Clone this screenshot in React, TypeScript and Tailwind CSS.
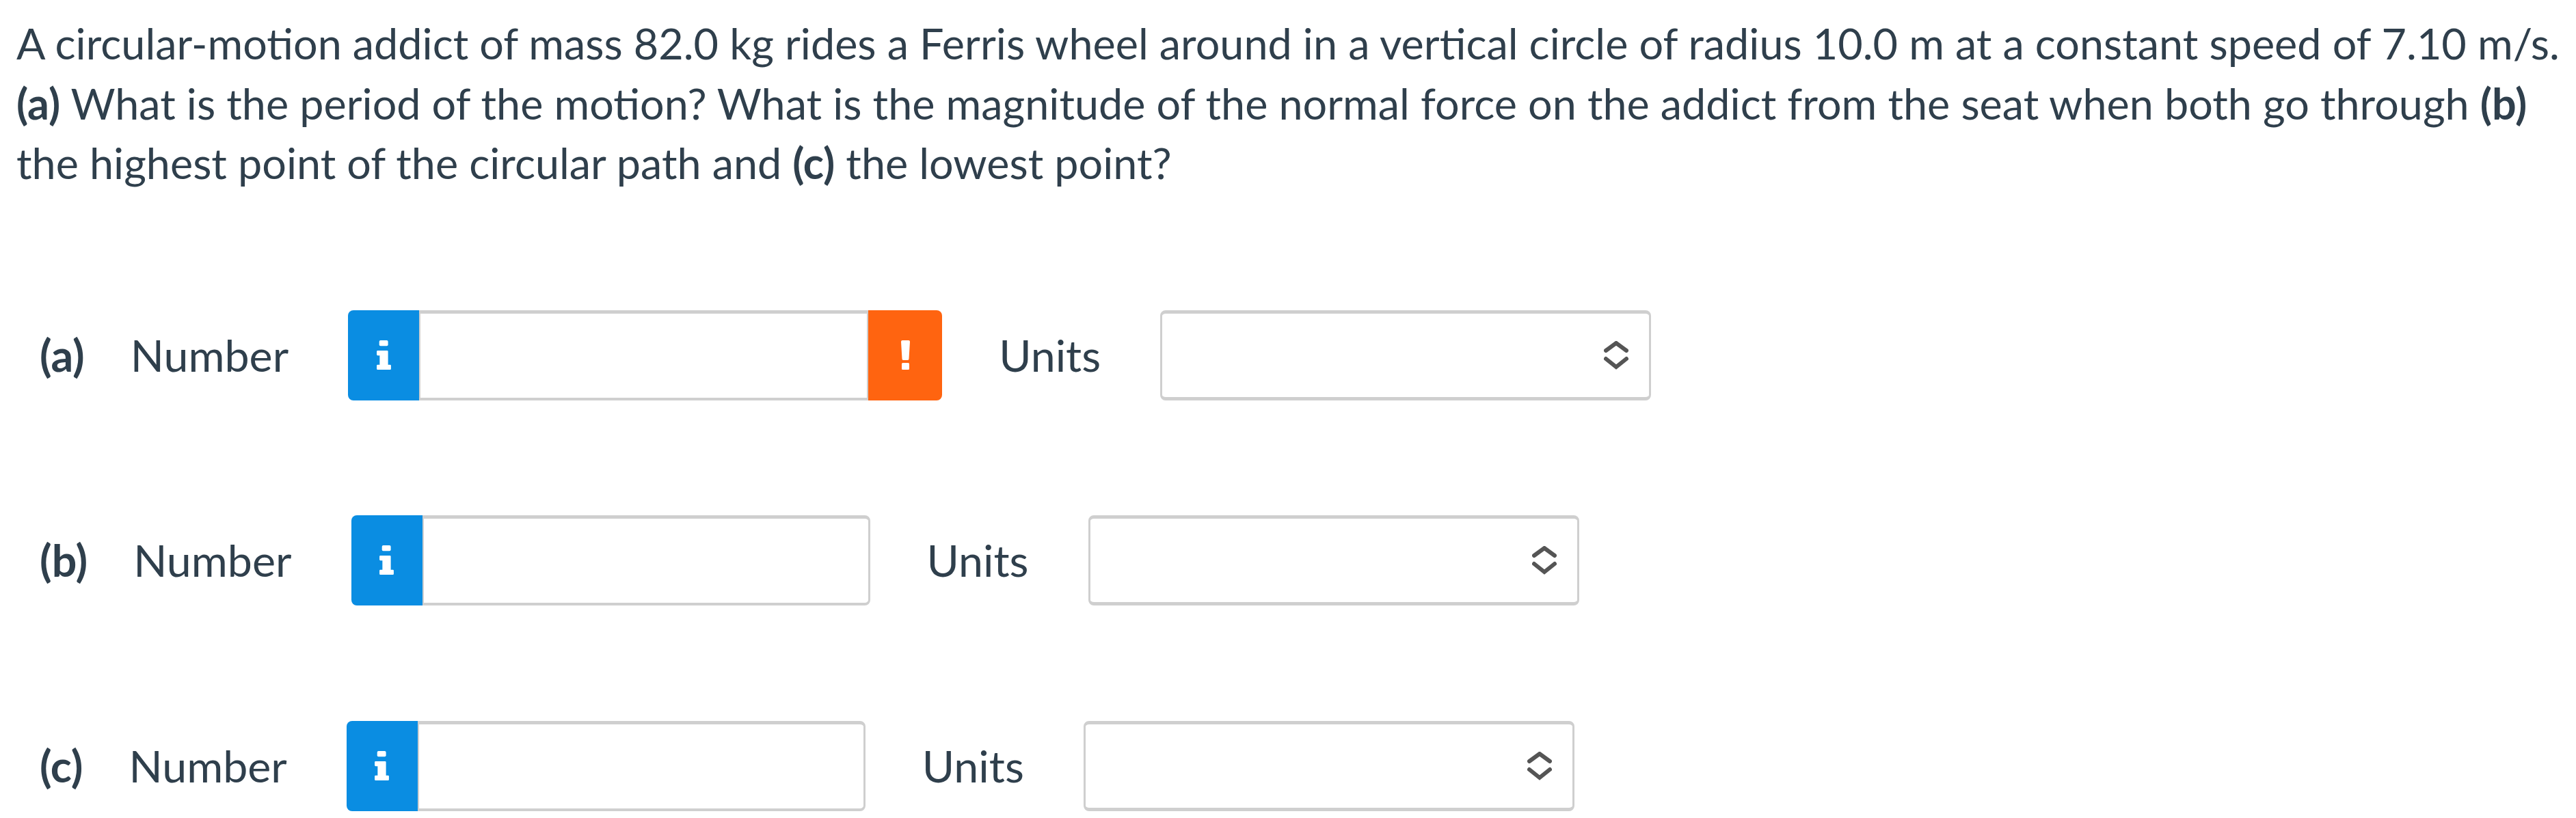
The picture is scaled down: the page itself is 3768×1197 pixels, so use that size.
function InfoIcon() {
  return (
    <svg viewBox="0 0 63 130" className="w-[21px] h-[43px]" fill="#fff">
      <rect x="11" y="0" width="39" height="25" rx="6" />
      <path d="M4 45H46Q50 45 50 49V108H59Q63 108 63 112V126Q63 130 59 130H4Q0 130 0 126V112Q0 108 4 108H13V67H4Q0 67 0 63V49Q0 45 4 45Z" />
    </svg>
  );
}

function AlertIcon() {
  return (
    <svg viewBox="0 0 15 43" className="w-[15px] h-[43px]" fill="#fff">
      <path d="M1 2Q1 0 3 0H12Q14 0 14 2L12.5 27Q12.4 29 11 29H4Q2.6 29 2.5 27Z" />
      <rect x="2" y="33" width="11" height="10" rx="1.5" />
    </svg>
  );
}

function Chevrons() {
  return (
    <svg viewBox="0 0 36 42" className="w-[36px] h-[42px]" fill="none" stroke="#555" strokeWidth="6" strokeLinecap="round">
      <path d="M3 14L18 3L33 14" />
      <path d="M3 26L18 38L33 26" />
    </svg>
  );
}

function AnswerRow({ label, alert, inputWidth, className }: { label: string; alert?: boolean; inputWidth: string; className: string }) {
  return (
    <div className={`flex items-center pl-[58px] text-[64.5px] ${className}`}>
      <span className="font-bold">{label}</span>
      <span className="ml-[67px]">Number</span>
      <div className="flex h-[132px] ml-[87px]">
        <div className="w-[104px] flex items-center justify-center bg-[#0a8de2] rounded-l-lg">
          <InfoIcon />
        </div>
        <input
          readOnly
          className={`${inputWidth} bg-white border-[#cfcfcf] border-t-[5px] border-b-[4px] border-l-[2px] outline-none ${alert ? 'border-r-[2px]' : 'border-r-[3px] rounded-r-lg'}`}
        />
        {alert && (
          <div className="w-[108px] flex items-center justify-center bg-[#ff6410] rounded-r-lg">
            <AlertIcon />
          </div>
        )}
      </div>
      <span className="ml-[83px]">Units</span>
      <div className="ml-[87px] w-[718px] h-[132px] flex items-center justify-end pr-[30px] bg-white border-[3px] border-t-[5px] border-b-[5px] border-[#cfcfcf] rounded-lg">
        <Chevrons />
      </div>
    </div>
  );
}

export default function App() {
  return (
    <div className="w-[3768px] h-[1197px] overflow-hidden bg-white text-[#2f3f4c] text-[62.9px] leading-[87.5px] font-['Lato',sans-serif]">
      <p className="pl-[24px] pt-[19px] whitespace-nowrap">
        A circular-motion addict of mass 82.0 kg rides a Ferris wheel around in a vertical circle of radius 10.0 m at a constant speed of 7.10 m/s.
        <br />
        <b>(a)</b> What is the period of the motion? What is the magnitude of the normal force on the addict from the seat when both go through <b>(b)</b>
        <br />
        the highest point of the circular path and <b>(c)</b> the lowest point?
      </p>
      <AnswerRow label="(a)" alert inputWidth="w-[657px]" className="mt-[172px]" />
      <AnswerRow label="(b)" inputWidth="w-[655px]" className="mt-[168px]" />
      <AnswerRow label="(c)" inputWidth="w-[655px]" className="mt-[169px]" />
    </div>
  );
}
